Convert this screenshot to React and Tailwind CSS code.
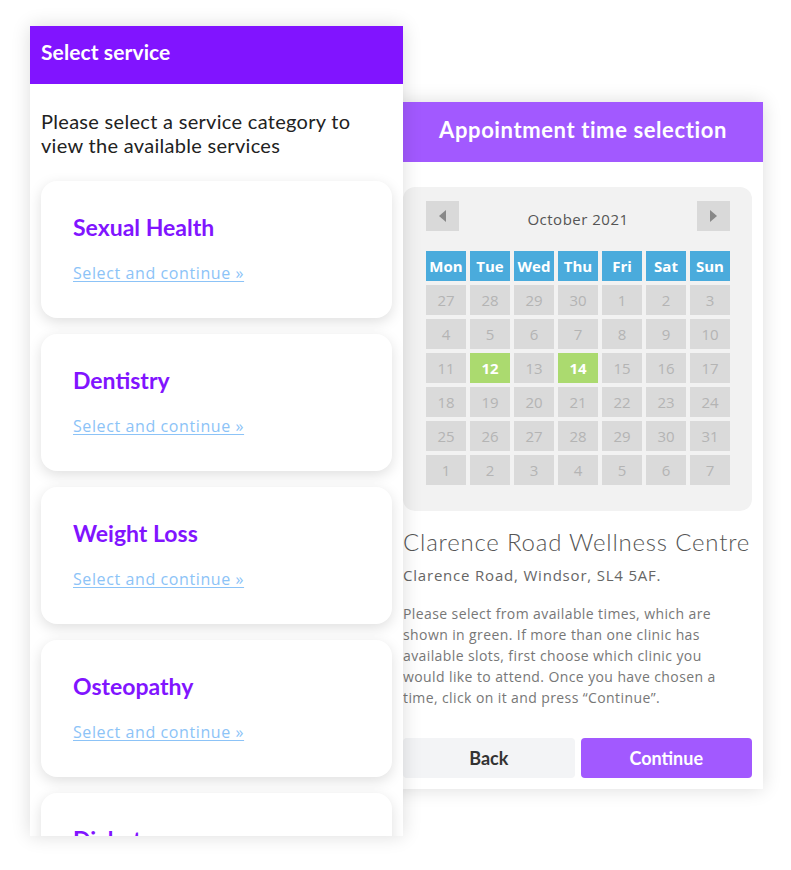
import React from "react";

const services = ["Sexual Health", "Dentistry", "Weight Loss", "Osteopathy", "Diabetes"];

const weeks = [
  [27, 28, 29, 30, 1, 2, 3],
  [4, 5, 6, 7, 8, 9, 10],
  [11, 12, 13, 14, 15, 16, 17],
  [18, 19, 20, 21, 22, 23, 24],
  [25, 26, 27, 28, 29, 30, 31],
  [1, 2, 3, 4, 5, 6, 7],
];
const days = ["Mon", "Tue", "Wed", "Thu", "Fri", "Sat", "Sun"];
const available = ["2-1", "2-3"];

const head = { fontFamily: "Lato, 'Noto Sans', sans-serif" };
const body = { fontFamily: "'Open Sans', 'Noto Sans', sans-serif" };

const ServiceCard = ({ name }) => (
  <div className="mx-[11px] h-[137px] shrink-0 rounded-2xl bg-white px-8 pt-8 shadow-[0_4px_14px_rgba(0,0,0,0.13)]">
    <h3 style={head} className="text-[23px] leading-7 font-bold text-[#8114ff]">
      {name}
    </h3>
    <a
      href="#"
      style={body}
      className="mt-[22px] block w-fit text-[16px] leading-5 tracking-[0.6px] text-[#8cc3f7] underline underline-offset-2"
    >
      Select and continue »
    </a>
  </div>
);

const Calendar = () => (
  <div className="rounded-xl bg-[#f2f2f2] pt-[14px] pr-[22px] pb-[26px] pl-[23px]" style={body}>
    <div className="flex h-[30px] items-center justify-between">
      <button className="flex h-[30px] w-[33px] items-center justify-center bg-[#d9d9d9]">
        <span className="h-0 w-0 border-y-[6px] border-r-[7px] border-y-transparent border-r-[#888]" />
      </button>
      <span className="pt-[6px] text-[15px] font-medium tracking-[0.5px] text-[#555]">October 2021</span>
      <button className="flex h-[30px] w-[33px] items-center justify-center bg-[#d9d9d9]">
        <span className="h-0 w-0 border-y-[6px] border-l-[7px] border-y-transparent border-l-[#888]" />
      </button>
    </div>
    <div className="mt-5 grid grid-cols-[repeat(7,40px)] gap-1">
      {days.map((d) => (
        <div
          key={d}
          className="flex h-[30px] items-center justify-center bg-[#4aabdc] text-[15px] font-bold text-white"
        >
          {d}
        </div>
      ))}
      {weeks.map((w, i) =>
        w.map((n, j) => {
          const on = available.includes(`${i}-${j}`);
          return (
            <div
              key={`${i}-${j}`}
              className={
                on
                  ? "flex h-[30px] items-center justify-center bg-[#abda6f] text-[15px] font-bold text-white"
                  : "flex h-[30px] items-center justify-center bg-[#dadada] text-[15px] text-[#b4b4b4]"
              }
            >
              {n}
            </div>
          );
        })
      )}
    </div>
  </div>
);

export default function App() {
  return (
    <div className="flex min-h-[870px] w-[791px] items-start bg-white pt-[26px] pl-[30px]">
      <div className="relative z-10 flex h-[810px] w-[373px] shrink-0 flex-col overflow-hidden bg-white shadow-[0_0_18px_rgba(0,0,0,0.14)]">
        <div className="flex h-[58px] shrink-0 items-center bg-[#8114ff] px-[11px] pb-[6px]">
          <h1 style={head} className="text-[21px] font-bold tracking-[0.1px] text-white">
            Select service
          </h1>
        </div>
        <p
          style={head}
          className="w-[345px] px-[11px] pt-[25px] pb-6 text-[20px] leading-6 tracking-[0.3px] text-[#222]"
        >
          Please select a service category to view the available services
        </p>
        <div className="flex flex-col gap-4">
          {services.map((s) => (
            <ServiceCard key={s} name={s} />
          ))}
        </div>
      </div>

      <div className="-ml-3 mt-[76px] w-[372px] shrink-0 bg-white pb-[11px] shadow-[0_0_18px_rgba(0,0,0,0.14)]">
        <div className="flex h-[60px] items-center justify-center bg-[#a259ff] pb-[5px] pl-3">
          <h2 style={head} className="text-[22px] font-bold tracking-[0.6px] text-white">
            Appointment time selection
          </h2>
        </div>
        <div className="pt-[25px] pr-[11px] pl-3">
          <Calendar />
          <h3
            style={head}
            className="mt-[15px] text-[24px] leading-8 font-light tracking-[0.8px] text-[#555]"
          >
            Clarence Road Wellness Centre
          </h3>
          <p style={body} className="mt-[5px] text-[15px] leading-6 tracking-[0.8px] text-[#666]">
            Clarence Road, Windsor, SL4 5AF.
          </p>
          <p
            style={body}
            className="mt-4 w-[326px] text-[14px] leading-[21px] tracking-[0.4px] text-[#777]"
          >
            Please select from available times, which are shown in green. If more than one clinic has
            available slots, first choose which clinic you would like to attend. Once you have chosen a
            time, click on it and press “Continue”.
          </p>
          <div className="mt-[30px] flex gap-[6px]">
            <button
              style={head}
              className="h-10 flex-1 rounded bg-[#f3f4f6] text-[18px] font-bold text-[#333]"
            >
              Back
            </button>
            <button
              style={head}
              className="h-10 flex-1 rounded bg-[#a259ff] text-[18px] font-bold text-white"
            >
              Continue
            </button>
          </div>
        </div>
      </div>
    </div>
  );
}
